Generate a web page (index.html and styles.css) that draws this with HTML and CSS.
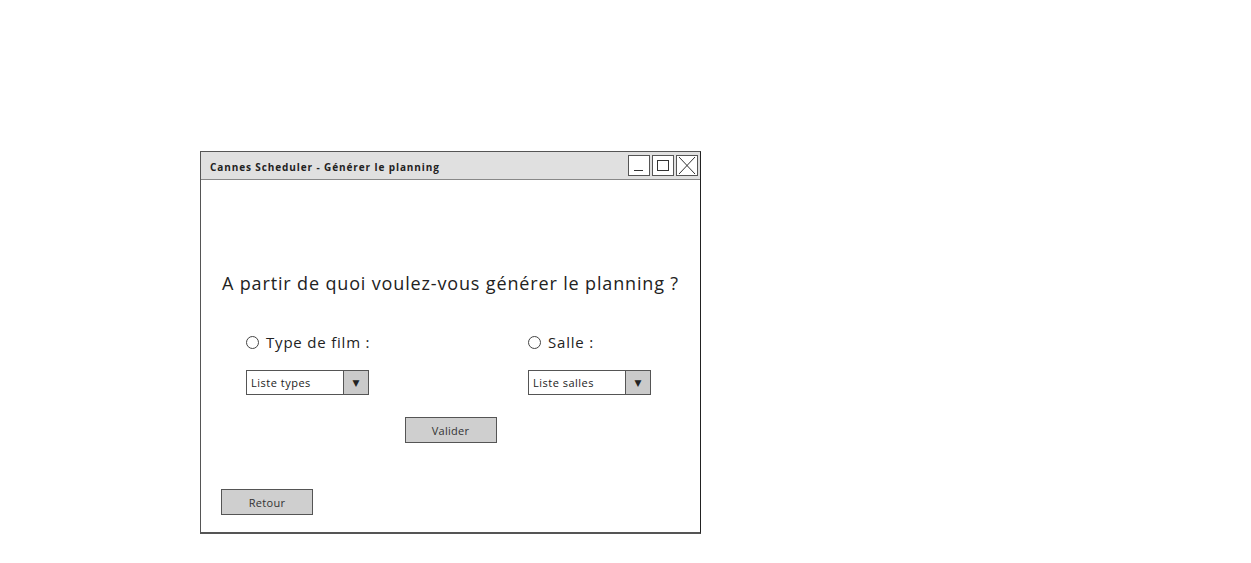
FILE: index.html
```html
<!DOCTYPE html>
<html lang="fr">
<head>
<meta charset="utf-8">
<title>Cannes Scheduler - Générer le planning</title>
<link rel="stylesheet" href="styles.css">
</head>
<body>
<div class="page">
  <div class="window">
    <div class="titlebar">
      <span class="title">Cannes Scheduler - Générer le planning</span>
      <div class="controls">
        <span class="ctl"><svg width="22" height="21" viewBox="0 0 22 21"><line x1="6" y1="15.5" x2="15" y2="15.5" stroke="#333" stroke-width="1"/></svg></span>
        <span class="ctl"><svg width="22" height="21" viewBox="0 0 22 21"><rect x="5.5" y="5.5" width="11" height="10" fill="none" stroke="#333" stroke-width="1"/></svg></span>
        <span class="ctl"><svg width="22" height="21" viewBox="0 0 22 21"><path d="M3 2 L19 19 M19 2 L3 19" stroke="#333" stroke-width="1" fill="none"/></svg></span>
      </div>
    </div>
    <div class="content">
      <p class="question">A partir de quoi voulez-vous générer le planning ?</p>
      <div class="options">
        <div class="option">
          <label class="radio"><span class="dot"></span>Type de film :</label>
          <div class="select"><span class="sel-text">Liste types</span><span class="sel-arrow">▼</span></div>
        </div>
        <div class="option">
          <label class="radio"><span class="dot"></span>Salle :</label>
          <div class="select"><span class="sel-text">Liste salles</span><span class="sel-arrow">▼</span></div>
        </div>
      </div>
      <div class="center-row"><button class="btn">Valider</button></div>
      <div class="back-row"><button class="btn">Retour</button></div>
    </div>
  </div>
</div>
</body>
</html>
```

FILE: styles.css
```css
* { box-sizing: border-box; }
body {
  margin: 0;
  background: #fff;
  font-family: "Open Sans", "DejaVu Sans", sans-serif;
  color: #222;
}
.page {
  padding: 151px 0 0 200px;
}
.window {
  width: 501px;
  height: 383px;
  border: 1px solid #555;
  border-right-color: #222;
  border-bottom: 2px solid #555;
  background: #fff;
  display: flex;
  flex-direction: column;
}
.titlebar {
  height: 28px;
  background: #e0e0e0;
  border-bottom: 1px solid #888;
  display: flex;
  align-items: center;
  justify-content: space-between;
  padding: 0 2px 0 9px;
}
.title {
  font-size: 10px;
  letter-spacing: 0.9px;
  font-weight: 700;
  color: #222;
  padding-top: 2px;
}
.controls {
  display: flex;
  gap: 2px;
}
.ctl {
  width: 22px;
  height: 21px;
  border: 1px solid #555;
  background: #fff;
  display: flex;
}
.ctl svg { display: block; margin: -1px; }
.content {
  flex: 1;
  display: flex;
  flex-direction: column;
  padding: 0 0 0 20px;
}
.question {
  margin: 92px 0 0 1px;
  font-size: 18px;
  letter-spacing: 0.85px;
  line-height: 22px;
  color: #222;
}
.options {
  display: grid;
  grid-template-columns: 282px 200px;
  margin: 38px 0 0 25px;
}
.option {
  display: flex;
  flex-direction: column;
  gap: 18px;
}
.radio {
  display: flex;
  align-items: center;
  gap: 7px;
  font-size: 15px;
  letter-spacing: 0.8px;
  line-height: 20px;
}
.dot {
  width: 13px;
  height: 13px;
  border: 1px solid #444;
  border-radius: 50%;
  background: #fff;
}
.select {
  width: 123px;
  height: 25px;
  border: 1px solid #555;
  display: flex;
  background: #fff;
}
.sel-text {
  flex: 1;
  font-size: 11px;
  letter-spacing: 0.5px;
  padding: 4px 0 0 4px;
}
.sel-arrow {
  width: 25px;
  background: #cacaca;
  border-left: 1px solid #555;
  font-size: 9px;
  display: flex;
  align-items: center;
  justify-content: center;
}
.center-row {
  display: flex;
  justify-content: center;
  margin: 22px 20px 0 0;
}
.back-row {
  display: flex;
  margin-top: 46px;
}
.btn {
  width: 92px;
  height: 26px;
  background: #cfcfcf;
  border: 1px solid #555;
  font-family: inherit;
  font-size: 11px;
  letter-spacing: 0.3px;
  color: #333;
  padding: 0;
}
```
